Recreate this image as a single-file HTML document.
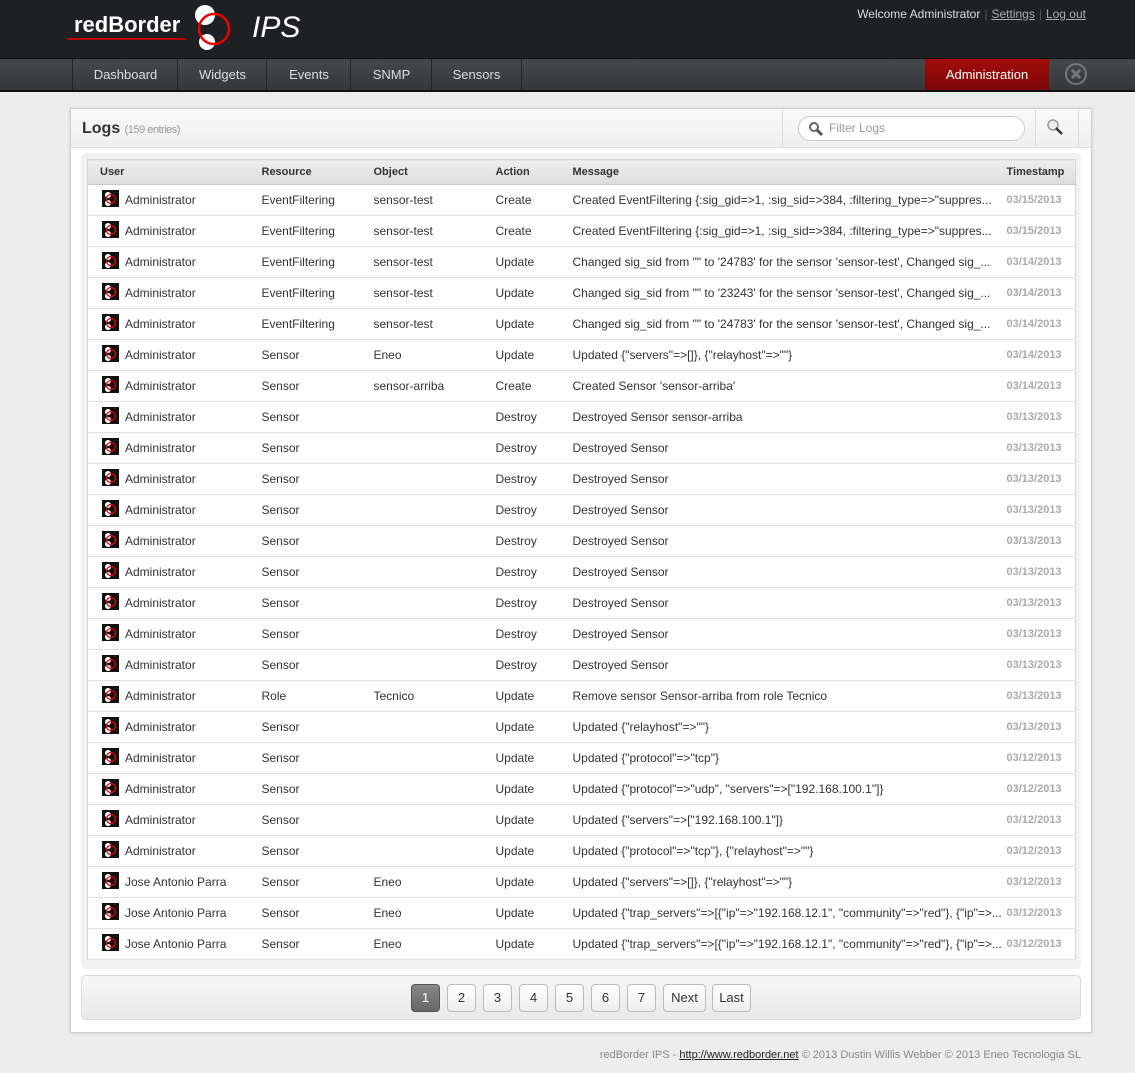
<!DOCTYPE html>
<html><head><meta charset="utf-8"><style>
*{box-sizing:border-box;margin:0;padding:0}
body{width:1135px;height:1073px;background:#ededed;font-family:"Liberation Sans",Arial,sans-serif;font-size:12px;color:#333;position:relative;overflow:hidden}
.hdr{position:absolute;left:0;top:0;width:1135px;height:58px;background:#1e2023}
.nav{position:absolute;left:0;top:58px;width:1135px;height:34px;background:linear-gradient(#45484c,#35383b);border-top:1px solid #0e0e0e;border-bottom:2px solid #111}
.nav a{position:absolute;top:0;height:31px;line-height:31px;text-align:center;color:#ddd;font-size:13px;border-left:1px solid #23252a;text-decoration:none}
.adm{position:absolute;left:925px;top:0;width:124px;height:31px;background:linear-gradient(#a30d0d,#7d0606);color:#fff;font-size:13px;line-height:31px;text-align:center}
.welcome{position:absolute;right:49px;top:7px;color:#ddd;font-size:12px}
.welcome u{color:#aaa}
.welcome i{font-style:normal;color:#555;margin:0 4px}
.panel{position:absolute;left:70px;top:108px;width:1022px;height:925px;background:#fff;border:1px solid #d0d0d0;box-shadow:0 0 3px rgba(0,0,0,.15)}
.ph{position:absolute;left:0;top:0;width:1020px;height:39px;background:linear-gradient(#fafafa,#efefef);border-bottom:1px solid #e2e2e2}
.tw{position:absolute;left:10px;top:44px;width:1000px;height:816px;background:#f2f2f2;border-radius:5px}
table{position:absolute;left:6px;top:6px;width:989px;border-collapse:collapse;background:#fff;border:1px solid #d6d6d6;table-layout:fixed}
th{height:25px;text-align:left;font-size:11px;font-weight:bold;color:#333;background:linear-gradient(#eeeeee,#dcdcdc);border-bottom:1px solid #c8c8c8}
td{height:31px;border-bottom:1px solid #e0e0e0;white-space:nowrap;overflow:hidden;font-size:12px;color:#333}
td.ts{color:#aaa;font-size:11px;font-weight:bold}
.ic{display:inline-block;width:17px;height:17px;vertical-align:middle;margin:-3px 6px 0 2px}
.pg{position:absolute;left:10px;top:866px;width:1000px;height:45px;background:linear-gradient(#f7f7f7,#e9e9e9);border:1px solid #dadada;border-radius:5px}
.b{position:absolute;top:8px;height:28px;border:1px solid #bbb;border-radius:4px;background:linear-gradient(#fff,#eee);text-align:center;line-height:26px;font-size:13px;color:#333}
.foot{position:absolute;right:54px;top:1049px;color:#888;font-size:11px}
.foot u{color:#222}
</style></head><body>
<div class="hdr">
<svg width="320" height="58" style="position:absolute;left:60px;top:0">
<text x="14" y="32" fill="#fff" font-family="Liberation Sans" font-weight="bold" font-size="22">redBorder</text>
<rect x="7" y="38" width="119" height="2" fill="#b00"/>
<circle cx="145" cy="15" r="10" fill="#fff"/><circle cx="147" cy="42" r="8" fill="#fff"/>
<circle cx="154" cy="29" r="15" fill="none" stroke="#e00" stroke-width="2.5"/>
<text x="192" y="37" fill="#fff" font-family="Liberation Sans" font-style="italic" font-size="30">IPS</text>
</svg>
<div class="welcome">Welcome Administrator<i>|</i><u>Settings</u><i>|</i><u>Log out</u></div>
</div>
<div class="nav">
<a style="left:72px;width:106px">Dashboard</a><a style="left:177px;width:90px">Widgets</a><a style="left:266px;width:85px">Events</a><a style="left:350px;width:82px">SNMP</a><a style="left:431px;width:91px;border-right:1px solid #23252a">Sensors</a>
<div class="adm">Administration</div>
<svg width="24" height="24" style="position:absolute;left:1064px;top:3px"><circle cx="12" cy="12" r="10" fill="none" stroke="#777" stroke-width="2"/><path d="M8 8L16 16M16 8L8 16" stroke="#777" stroke-width="3"/></svg>
</div>
<div class="panel">
<div class="ph">
<div style="position:absolute;left:11px;top:11px;font-size:16px;font-weight:bold;color:#333">Logs <span style="font-size:11px;font-weight:normal;color:#999;letter-spacing:-.5px">(159 entries)</span></div>
<div style="position:absolute;left:711px;top:0;width:1px;height:39px;background:#ddd"></div>
<div style="position:absolute;left:727px;top:7px;width:227px;height:25px;border:1px solid #ccc;border-radius:13px;background:#fff;color:#999;font-size:12px;line-height:23px;padding-left:30px">Filter Logs
<svg width="16" height="16" style="position:absolute;left:9px;top:4px"><circle cx="6" cy="6" r="4" fill="none" stroke="#666" stroke-width="2"/><path d="M9 9L14 14" stroke="#555" stroke-width="3"/></svg></div>
<div style="position:absolute;left:964px;top:0;width:1px;height:39px;background:#ddd"></div>
<div style="position:absolute;left:1007px;top:0;width:1px;height:39px;background:#ddd"></div>
<svg width="20" height="20" style="position:absolute;left:975px;top:9px"><circle cx="7" cy="7" r="5" fill="#eee" stroke="#999" stroke-width="1.5"/><path d="M10 10L16 16" stroke="#333" stroke-width="2.5"/></svg>
</div>
<div class="tw"><table>
<thead><tr><th style="padding-left:12px;width:174px">User</th><th style="width:112px">Resource</th><th style="width:122px">Object</th><th style="width:77px">Action</th><th style="width:434px">Message</th><th>Timestamp</th></tr></thead>
<tbody id="tb"></tbody>
</table></div>
<div class="pg">
<div class="b" style="left:329px;width:29px;background:linear-gradient(#888,#666);border-color:#555;color:#fff">1</div>
<div class="b" style="left:365px;width:29px">2</div><div class="b" style="left:401px;width:29px">3</div><div class="b" style="left:437px;width:29px">4</div><div class="b" style="left:473px;width:29px">5</div><div class="b" style="left:509px;width:29px">6</div><div class="b" style="left:545px;width:29px">7</div>
<div class="b" style="left:581px;width:43px">Next</div><div class="b" style="left:630px;width:39px">Last</div>
</div>
</div>
<div class="foot">redBorder IPS - <u>http://www.redborder.net</u> © 2013 Dustin Willis Webber © 2013 Eneo Tecnologia SL</div>
<script>
var I='<svg class="ic" viewBox="0 0 17 17"><rect width="17" height="17" fill="#111"/><circle cx="6" cy="5" r="3" fill="#fff"/><circle cx="6" cy="13" r="3" fill="#fff"/><circle cx="9" cy="9" r="4.5" fill="none" stroke="#e00" stroke-width="1.3"/></svg>';
var A='Administrator',J='Jose Antonio Parra',ds='Destroyed Sensor';
var r=[[A,'EventFiltering','sensor-test','Create','Created EventFiltering {:sig_gid=>1, :sig_sid=>384, :filtering_type=>"suppres...','03/15/2013'],
[A,'EventFiltering','sensor-test','Create','Created EventFiltering {:sig_gid=>1, :sig_sid=>384, :filtering_type=>"suppres...','03/15/2013'],
[A,'EventFiltering','sensor-test','Update','Changed sig_sid from "" to \'24783\' for the sensor \'sensor-test\', Changed sig_...','03/14/2013'],
[A,'EventFiltering','sensor-test','Update','Changed sig_sid from "" to \'23243\' for the sensor \'sensor-test\', Changed sig_...','03/14/2013'],
[A,'EventFiltering','sensor-test','Update','Changed sig_sid from "" to \'24783\' for the sensor \'sensor-test\', Changed sig_...','03/14/2013'],
[A,'Sensor','Eneo','Update','Updated {"servers"=>[]}, {"relayhost"=>""}','03/14/2013'],
[A,'Sensor','sensor-arriba','Create','Created Sensor \'sensor-arriba\'','03/14/2013'],
[A,'Sensor','','Destroy','Destroyed Sensor sensor-arriba','03/13/2013']];
for(var i=0;i<8;i++)r.push([A,'Sensor','','Destroy',ds,'03/13/2013']);
r.push([A,'Role','Tecnico','Update','Remove sensor Sensor-arriba from role Tecnico','03/13/2013'],
[A,'Sensor','','Update','Updated {"relayhost"=>""}','03/13/2013'],
[A,'Sensor','','Update','Updated {"protocol"=>"tcp"}','03/12/2013'],
[A,'Sensor','','Update','Updated {"protocol"=>"udp", "servers"=>["192.168.100.1"]}','03/12/2013'],
[A,'Sensor','','Update','Updated {"servers"=>["192.168.100.1"]}','03/12/2013'],
[A,'Sensor','','Update','Updated {"protocol"=>"tcp"}, {"relayhost"=>""}','03/12/2013'],
[J,'Sensor','Eneo','Update','Updated {"servers"=>[]}, {"relayhost"=>""}','03/12/2013'],
[J,'Sensor','Eneo','Update','Updated {"trap_servers"=>[{"ip"=>"192.168.12.1", "community"=>"red"}, {"ip"=>...','03/12/2013'],
[J,'Sensor','Eneo','Update','Updated {"trap_servers"=>[{"ip"=>"192.168.12.1", "community"=>"red"}, {"ip"=>...','03/12/2013']);
function e(s){return s.replace(/&/g,'&amp;').replace(/</g,'&lt;').replace(/>/g,'&gt;')}
var h='';r.forEach(function(x){h+='<tr><td style="padding-left:12px">'+I+e(x[0])+'</td><td>'+e(x[1])+'</td><td>'+e(x[2])+'</td><td>'+x[3]+'</td><td>'+e(x[4])+'</td><td class="ts">'+x[5]+'</td></tr>'});
document.getElementById('tb').innerHTML=h;
</script>
</body></html>
